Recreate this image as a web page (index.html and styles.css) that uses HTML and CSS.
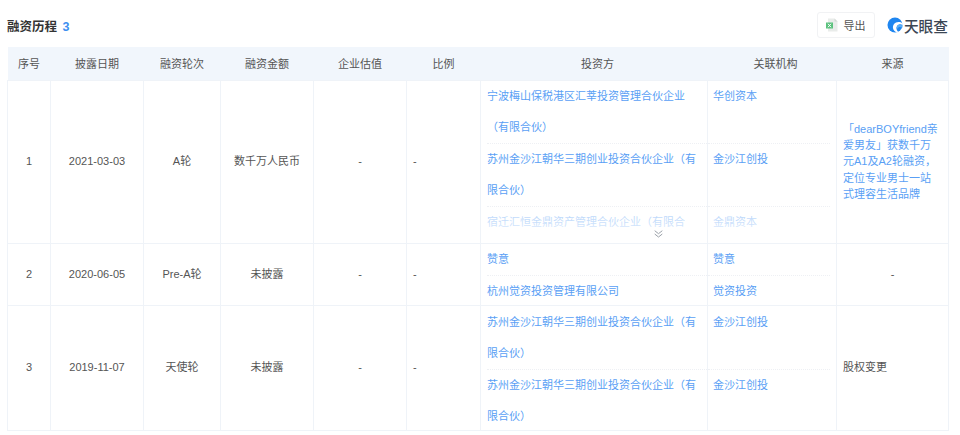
FILE: index.html
```html
<!DOCTYPE html>
<html lang="zh">
<head>
<meta charset="utf-8">
<title>融资历程</title>
<link rel="stylesheet" href="styles.css">
</head>
<body>
<div class="page">
  <header class="bar">
    <h2 class="title">融资历程 <span class="count">3</span></h2>
    <div class="tools">
      <button class="export">
        <svg class="xls" width="12" height="14" viewBox="0 0 12 14"><path d="M2 .5h6.500L11.500 3.500V13.500H2z" fill="#e9ecea"/><path d="M8.500.5l3 3h-3z" fill="#d3d9d5"/><rect x="0" y="4.500" width="7" height="6" fill="#5cc27e"/><path d="M2 5.800l3 3.400M5 5.800l-3 3.400" stroke="#fff" stroke-width="1"/></svg>
        <span>导出</span>
      </button>
      <div class="logo">
        <svg width="16" height="16" viewBox="0 0 16 16"><circle cx="8" cy="8" r="7.500" fill="#1f86f0"/><path d="M15.600 6.500C13 4.300 9 4.600 7 7c-1.600 2-1.400 5 .3 6.800.7.800 1.600 1.400 2.600 1.800l1.600-.6c-1.300-1-2-2.300-2.100-3.700-.1-1.800 1-3.300 2.600-3.800 1.300-.4 2.700-.1 3.600.7z" fill="#fff"/><path d="M10.700 8.300c1.700-.8 3.500-.5 4.800.4l-.3 2.300c-1-.9-2.600-1.300-3.800-.6-.6.400-1 1-1.100 1.700-.6-1.400-.5-3 .4-3.800z" fill="#59aef6"/></svg>
        <span class="logo-text">天眼查</span>
      </div>
    </div>
  </header>
  <table class="grid">
    <colgroup>
      <col class="c1"><col class="c2"><col class="c3"><col class="c4"><col class="c5"><col class="c6"><col class="c7"><col class="c8"><col class="c9">
    </colgroup>
    <thead>
      <tr><th>序号</th><th>披露日期</th><th>融资轮次</th><th>融资金额</th><th>企业估值</th><th>比例</th><th class="th-shift">投资方</th><th class="th-shift">关联机构</th><th>来源</th></tr>
    </thead>
    <tbody>
      <tr class="r1">
        <td class="mid">1</td><td class="mid">2021-03-03</td><td class="mid">A轮</td><td class="mid">数千万人民币</td><td class="mid">-</td><td class="dash">-</td>
        <td class="list-left">
          <div class="clip">
            <div class="item"><a>宁波梅山保税港区汇莘投资管理合伙企业（有限合伙）</a></div>
            <div class="item"><a>苏州金沙江朝华三期创业投资合伙企业（有限合伙）</a></div>
            <div class="item"><a>宿迁汇恒金鼎资产管理合伙企业（有限合</a></div>
            <div class="fade"></div>
            <svg class="more" width="9" height="8" viewBox="0 0 9 8"><path d="M.7.700l3.800 3 3.800-3M.7 4l3.800 3 3.800-3" fill="none" stroke="#9aa0a8" stroke-width="1"/></svg>
          </div>
        </td>
        <td class="list-right">
          <div class="clip">
            <div class="item"><a>华创资本</a></div>
            <div class="item"><a>金沙江创投</a></div>
            <div class="item"><a>金鼎资本</a></div>
            <div class="fade"></div>
          </div>
        </td>
        <td class="source"><a>「dearBOYfriend亲爱男友」获数千万元A1及A2轮融资，定位专业男士一站式理容生活品牌</a></td>
      </tr>
      <tr class="r2">
        <td class="mid">2</td><td class="mid">2020-06-05</td><td class="mid">Pre-A轮</td><td class="mid">未披露</td><td class="mid">-</td><td class="dash">-</td>
        <td class="list-left">
          <div class="item single"><a>赞意</a></div>
          <div class="item single"><a>杭州觉资投资管理有限公司</a></div>
        </td>
        <td class="list-right">
          <div class="item single"><a>赞意</a></div>
          <div class="item single"><a>觉资投资</a></div>
        </td>
        <td class="mid">-</td>
      </tr>
      <tr class="r3">
        <td class="mid">3</td><td class="mid">2019-11-07</td><td class="mid">天使轮</td><td class="mid">未披露</td><td class="mid">-</td><td class="dash">-</td>
        <td class="list-left">
          <div class="item"><a>苏州金沙江朝华三期创业投资合伙企业（有限合伙）</a></div>
          <div class="item"><a>苏州金沙江朝华三期创业投资合伙企业（有限合伙）</a></div>
        </td>
        <td class="list-right">
          <div class="item"><a>金沙江创投</a></div>
          <div class="item"><a>金沙江创投</a></div>
        </td>
        <td class="plain">股权变更</td>
      </tr>
    </tbody>
  </table>
</div>
</body>
</html>
```
FILE: styles.css
```css
* { box-sizing: border-box; }
html, body { margin: 0; background: #fff; }
body {
  font-family: "Liberation Sans", "Noto Sans CJK SC", sans-serif;
  font-size: 11px;
  color: #555;
  height: 435px;
  overflow: hidden;
}
.page { padding: 0 11px 0 7px; }
.bar {
  height: 47px;
  display: flex;
  justify-content: space-between;
  align-items: center;
  padding-top: 7px;
  padding-bottom: 4px;
}
.title {
  margin: 0;
  font-size: 12.5px;
  font-weight: 700;
  color: #333;
}
.count { color: #3d8ff0; margin-left: 2px; }
.tools { display: flex; align-items: center; gap: 12px; margin-right: 1px; }
.export {
  width: 58px;
  height: 26px;
  display: flex;
  align-items: center;
  justify-content: center;
  gap: 5px;
  padding: 0;
  border: 1px solid #f1f2f4;
  border-radius: 3px;
  background: #fff;
  font: inherit;
  color: #555;
}
.logo { display: flex; align-items: center; gap: 1px; }
.logo-text { font-size: 14.7px; font-weight: 500; color: #3c4654; }
.grid {
  width: 941px;
  table-layout: fixed;
  border-collapse: collapse;
}
.c1 { width: 43px; } .c2 { width: 93px; } .c3 { width: 77px; }
.c4 { width: 93px; } .c5 { width: 93px; } .c6 { width: 74px; }
.c7 { width: 227px; } .c8 { width: 129px; } .c9 { width: 112px; }
th {
  height: 33px;
  padding: 0;
  background: #f1f6fc;
  font-weight: 400;
  color: #555;
  text-align: center;
}
.th-shift { padding-left: 7px; }
td {
  padding: 0;
  border: 1px solid #eff3f8;
  vertical-align: middle;
  line-height: 16.3px;
}
.r1 td { height: 163px; }
.r2 td { height: 62px; }
.r3 td { height: 125px; }
.mid { text-align: center; }
.dash { text-align: left; padding-left: 6px; }
a { color: #5a9ff5; }
.list-left { padding-left: 6px; vertical-align: top; }
.list-right { padding-right: 6px; vertical-align: top; border-left: 1px solid #e9f1fa; }
.r3 .list-left, .r3 .list-right { padding-top: 1px; }
.clip { position: relative; height: 162px; overflow: hidden; }
.item {
  min-height: 63px;
  line-height: 31px;
  border-bottom: 1px dotted #eef0f4;
  padding-right: 9px;
}
.list-right .item { padding-left: 5px; padding-right: 0; }
.item.single { min-height: 31px; }
.list-left > .item:last-child,
.list-right > .item:last-child { border-bottom: 0; margin-bottom: -2px; }
.r3 .list-left > .item:last-child,
.r3 .list-right > .item:last-child { margin-bottom: -3px; }
.fade {
  position: absolute;
  left: 0;
  right: 0;
  bottom: 0;
  height: 36px;
  background: linear-gradient(rgba(255,255,255,.5), rgba(255,255,255,.7) 50%, #fff 90%);
}
.more { position: absolute; left: 167px; bottom: 5px; }
.source { padding: 0 9px 0 6px; }
.plain { padding: 0 6px; }
```
